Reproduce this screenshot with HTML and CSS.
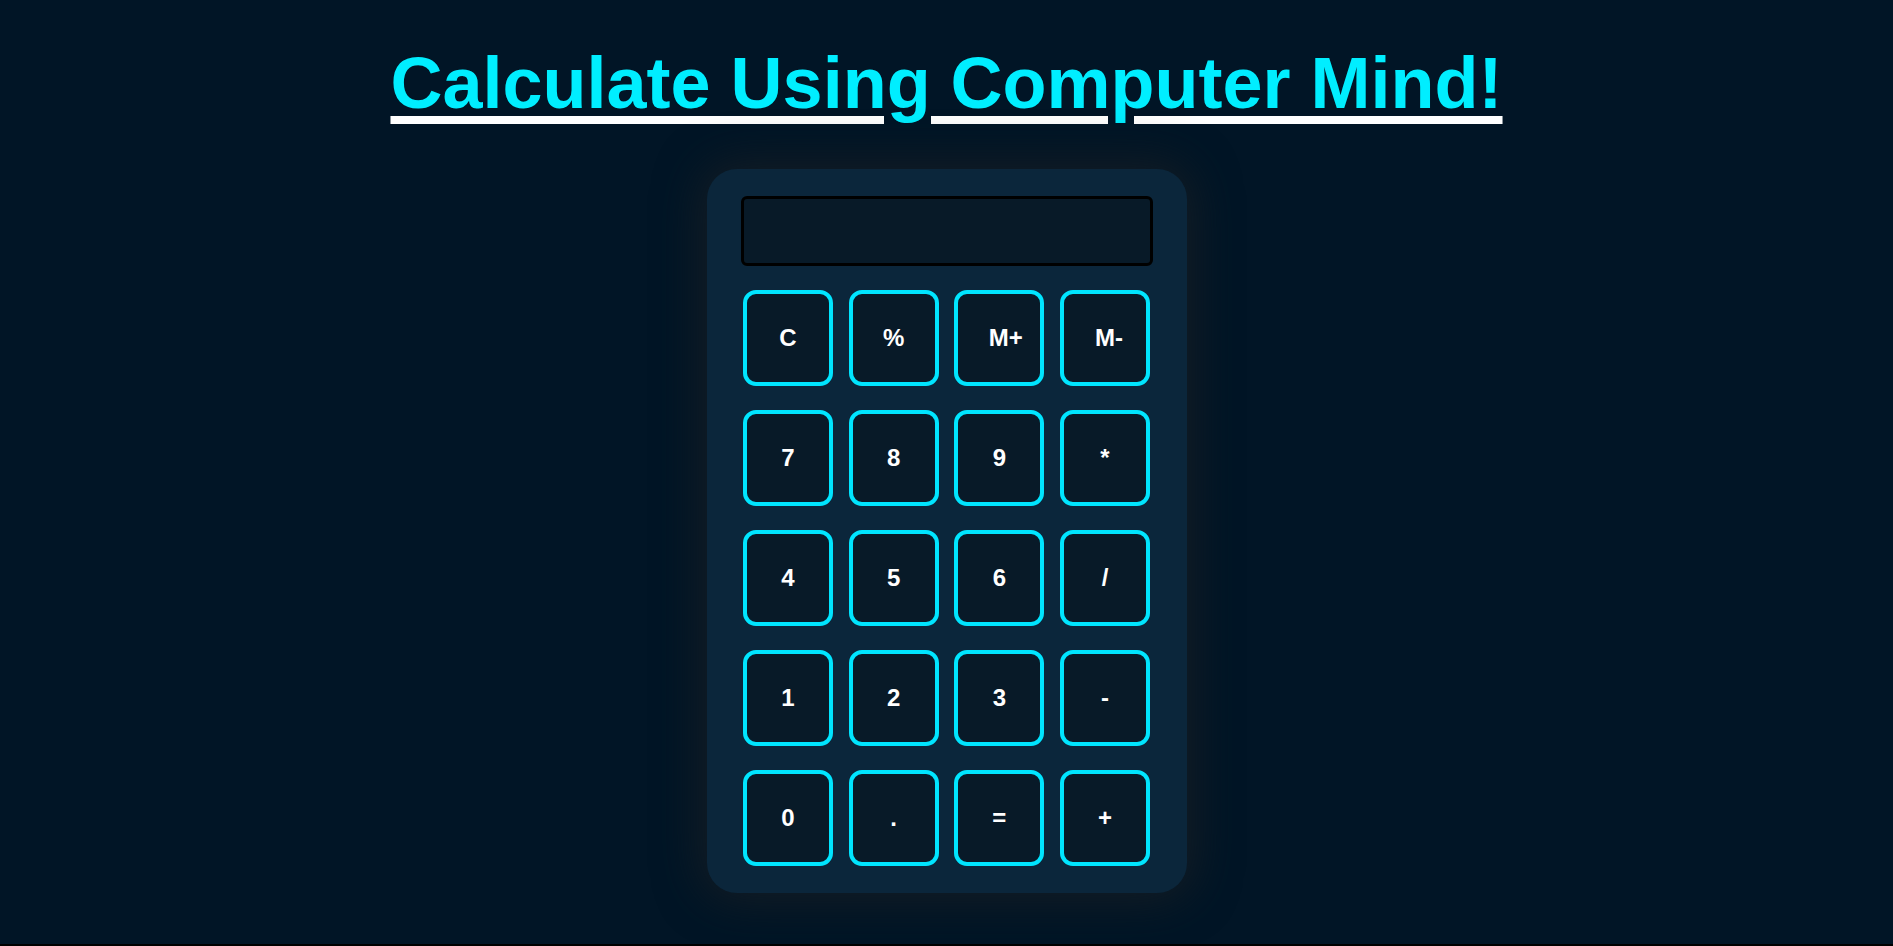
FILE: index.html
```html
<!DOCTYPE html>
<html lang="en">
<head>
<meta charset="utf-8">
<title>Calculator</title>
<link rel="stylesheet" href="styles.css">
</head>
<body>
<h1 class="title">Calculate Using Computer Mind!</h1>
<div class="calc">
  <div class="display"></div>
  <div class="keys">
    <button class="key">C</button>
    <button class="key">%</button>
    <button class="key key-mplus">M+</button>
    <button class="key key-mminus">M-</button>
    <button class="key">7</button>
    <button class="key">8</button>
    <button class="key">9</button>
    <button class="key">*</button>
    <button class="key">4</button>
    <button class="key">5</button>
    <button class="key">6</button>
    <button class="key">/</button>
    <button class="key">1</button>
    <button class="key">2</button>
    <button class="key">3</button>
    <button class="key">-</button>
    <button class="key">0</button>
    <button class="key">.</button>
    <button class="key">=</button>
    <button class="key">+</button>
  </div>
</div>
</body>
</html>
```
FILE: styles.css
```css
html {
  background: #000;
}
body {
  margin: 0;
  height: calc(100vh - 2px);
  background: #011526;
  font-family: "Liberation Sans", Arial, sans-serif;
  display: flex;
  flex-direction: column;
  align-items: center;
  overflow: hidden;
}
.title {
  margin: 42px 0 0;
  font-size: 72px;
  font-weight: bold;
  line-height: normal;
  color: #00eeff;
  text-decoration: underline;
  text-decoration-color: #ffffff;
  text-decoration-thickness: 8px;
  text-underline-offset: 8px;
}
.calc {
  margin-top: 45px;
  width: 480px;
  box-sizing: border-box;
  padding: 27px 34px;
  background: #0b263b;
  border-radius: 30px;
  box-shadow: 0 0 45px 6px rgba(22, 30, 36, 0.95);
}
.display {
  height: 70px;
  box-sizing: border-box;
  border: 3px solid #000;
  border-radius: 6px;
  background: #081a28;
}
.keys {
  margin-top: 24px;
  display: grid;
  grid-template-columns: repeat(4, 90px);
  grid-auto-rows: 96px;
  column-gap: 15.67px;
  row-gap: 24px;
  justify-content: center;
}
.key {
  box-sizing: border-box;
  margin: 0;
  padding: 0;
  border: 4px solid #00e5ff;
  border-radius: 13px;
  background: #081a28;
  color: #ffffff;
  font-family: "Liberation Sans", Arial, sans-serif;
  font-size: 24px;
  font-weight: bold;
  display: flex;
  align-items: center;
  justify-content: center;
}
.key-mplus {
  padding-left: 13px;
}
.key-mminus {
  padding-left: 8px;
}
```
